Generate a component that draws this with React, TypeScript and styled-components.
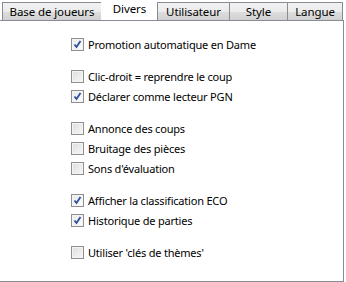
import React from 'react'
import styled, { createGlobalStyle } from 'styled-components'

const GlobalStyle = createGlobalStyle`
	html, body {
		margin: 0;
		padding: 0;
		background: #ffffff;
	}
	body {
		font-family: 'Noto Sans', 'DejaVu Sans', sans-serif;
		font-size: 11px;
		color: #000;
	}
`

const Window = styled.div`
	width: 346px;
	height: 282px;
	display: flex;
	flex-direction: column;
	background: #fff;
`

const TabStrip = styled.div`
	display: flex;
	height: 21px;
	padding-left: 2px;
	align-items: flex-end;
`

const Tab = styled.div<{ $active?: boolean; $width: number }>`
	width: ${({ $width }) => $width}px;
	height: ${({ $active }) => ($active ? 21 : 19)}px;
	box-sizing: border-box;
	display: flex;
	align-items: center;
	justify-content: center;
	font-size: 11.5px;
	letter-spacing: -0.1px;
	line-height: 1;
	padding-bottom: ${({ $active }) => ($active ? 3 : 0)}px;
	background: ${({ $active }) =>
		$active ? '#ffffff' : 'linear-gradient(#f2f2f2, #ebebeb 50%, #dddddd 51%, #cfcfcf)'};
	border: ${({ $active }) => ($active ? 'none' : '1px solid #898c95')};
	border-bottom: none;
	& + & {
		margin-left: -1px;
	}
`

const Panel = styled.div`
	flex: 1;
	width: 344px;
	box-sizing: border-box;
	border-right: 1px solid #898c95;
	border-bottom: 1px solid #898c95;
	border-top: 1px solid #898c95;
	margin-top: -1px;
	padding: 13px 0 0 71px;
	display: flex;
	flex-direction: column;
	gap: 12px;
`

const Group = styled.div`
	display: flex;
	flex-direction: column;
`

const Row = styled.label`
	display: flex;
	align-items: center;
	gap: 4px;
	height: 20px;
	white-space: nowrap;
	letter-spacing: -0.2px;
`

const Box = styled.span<{ $checked?: boolean }>`
	width: 13px;
	height: 13px;
	flex: none;
	box-sizing: border-box;
	border: 1px solid #8e8f8f;
	display: flex;
	align-items: center;
	justify-content: center;
	background: ${({ $checked }) =>
		$checked ? 'linear-gradient(135deg, #e8e8e8, #ffffff)' : 'linear-gradient(135deg, #dcdcdc, #f8f8f8)'};
	box-shadow: inset 0 0 0 1px #f4f4f4;
`

const Check = styled.svg`
	width: 9px;
	height: 9px;
`

const CheckItem = ({ label, checked }: { label: string; checked?: boolean }) => (
	<Row>
		<Box $checked={checked}>
			{checked && (
				<Check viewBox="0 0 9 9">
					<path d="M1.5 4.5 L3.5 7 L7.5 1" fill="none" stroke="#2d4f9e" strokeWidth="1.8" />
				</Check>
			)}
		</Box>
		{label}
	</Row>
)

const tabs = [
	{ label: 'Base de joueurs', width: 100 },
	{ label: 'Divers', width: 57, active: true },
	{ label: 'Utilisateur', width: 73 },
	{ label: 'Style', width: 59 },
	{ label: 'Langue', width: 56 },
]

const App = () => (
	<>
		<GlobalStyle />
		<Window>
			<TabStrip>
				{tabs.map((t) => (
					<Tab key={t.label} $active={t.active} $width={t.width}>
						{t.label}
					</Tab>
				))}
			</TabStrip>
			<Panel>
				<Group>
					<CheckItem label="Promotion automatique en Dame" checked />
				</Group>
				<Group>
					<CheckItem label="Clic-droit = reprendre le coup" />
					<CheckItem label="Déclarer comme lecteur PGN" checked />
				</Group>
				<Group>
					<CheckItem label="Annonce des coups" />
					<CheckItem label="Bruitage des pièces" />
					<CheckItem label="Sons d'évaluation" />
				</Group>
				<Group>
					<CheckItem label="Afficher la classification ECO" checked />
					<CheckItem label="Historique de parties" checked />
				</Group>
				<Group>
					<CheckItem label="Utiliser 'clés de thèmes'" />
				</Group>
			</Panel>
		</Window>
	</>
)

export default App
